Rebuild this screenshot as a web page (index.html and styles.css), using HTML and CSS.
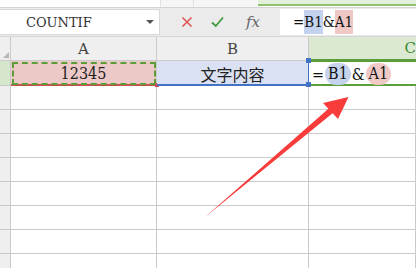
FILE: index.html
```html
<!DOCTYPE html>
<html>
<head>
  <meta charset="UTF-8">
  <title>COUNTIF</title>
  <link rel="stylesheet" href="styles.css">
</head>
<body>
  <div class="top-strip">
    <div class="strip-left"></div>
    <div class="strip-mid"></div>
    <div class="strip-gap"></div>
    <div class="strip-green"></div>
  </div>

  <div class="toolbar">
    <div class="name-box">
      <span class="name-text">COUNTIF</span>
      <span class="caret"></span>
    </div>
    <div class="tools">
      <svg class="icon" width="12" height="12" viewBox="0 0 12 12">
        <path d="M1.5 1.5 L10.5 10.5 M10.5 1.5 L1.5 10.5" stroke="#e05656" stroke-width="1.6" fill="none"/>
      </svg>
      <svg class="icon" width="13" height="12" viewBox="0 0 13 12">
        <path d="M1 6.5 L4.8 10 L12 1.5" stroke="#3e9a3e" stroke-width="1.8" fill="none"/>
      </svg>
      <span class="fx">fx</span>
    </div>
    <div class="formula-box">
      =<span class="hl-blue">B1</span>&amp;<span class="hl-red">A1</span>
    </div>
  </div>

  <div class="sheet">
    <div class="corner"><span class="tri"></span></div>
    <div class="col-head">A</div>
    <div class="col-head">B</div>
    <div class="col-head active">C</div>

    <div class="row-head active"></div>
    <div class="cell ref-a">12345</div>
    <div class="cell ref-b">文字内容</div>
    <div class="cell editing">=<span class="pill blue">B1</span>&amp;<span class="pill red">A1</span></div>

    <div class="row-head"></div><div class="cell"></div><div class="cell"></div><div class="cell"></div>
    <div class="row-head"></div><div class="cell"></div><div class="cell"></div><div class="cell"></div>
    <div class="row-head"></div><div class="cell"></div><div class="cell"></div><div class="cell"></div>
    <div class="row-head"></div><div class="cell"></div><div class="cell"></div><div class="cell"></div>
    <div class="row-head"></div><div class="cell"></div><div class="cell"></div><div class="cell"></div>
    <div class="row-head"></div><div class="cell"></div><div class="cell"></div><div class="cell"></div>
    <div class="row-head"></div><div class="cell"></div><div class="cell"></div><div class="cell"></div>
    <div class="row-head"></div><div class="cell"></div><div class="cell"></div><div class="cell"></div>
  </div>

  <svg class="arrow" width="416" height="268" viewBox="0 0 416 268">
    <polygon points="204,218 328.4,108.8 323,103 348.5,97 338,119 332.6,113.2" fill="#f83c3c"/>
  </svg>
</body>
</html>
```

FILE: styles.css
```css
body {
  margin: 0;
  width: 416px;
  height: 268px;
  overflow: hidden;
  position: relative;
  background: #fff;
  font-family: "DejaVu Serif", serif;
  color: #222;
}
.top-strip {
  display: flex;
  height: 7px;
  border-bottom: 1px solid #d4d4d4;
  background: #fff;
}
.strip-left {
  width: 160px;
  border-right: 1px solid #e2e2e2;
}
.strip-mid {
  width: 32px;
  border-right: 1px solid #e2e2e2;
  background: #f6f6f6;
}
.strip-gap {
  width: 64px;
  background: #f6f6f6;
}
.strip-green {
  flex: 1;
  background: #e4efdc;
  border-bottom: 2px solid #8fc06e;
  margin-bottom: 1px;
}
.toolbar {
  display: flex;
  align-items: center;
  height: 28px;
  background: #ebebeb;
  border-bottom: 1px solid #d6d6d6;
}
.name-box {
  display: flex;
  align-items: center;
  box-sizing: border-box;
  width: 160px;
  height: 26px;
  background: #fff;
  border: 1px solid #d8d8d8;
  border-left: none;
  padding-left: 26px;
  padding-right: 5px;
}
.name-text {
  flex: 1;
  font-family: "DejaVu Serif", serif;
  font-size: 13px;
  color: #333;
}
.caret {
  width: 0;
  height: 0;
  border-left: 4px solid transparent;
  border-right: 4px solid transparent;
  border-top: 4px solid #555;
}
.tools {
  display: flex;
  align-items: center;
  width: 120px;
  padding-left: 21px;
  box-sizing: border-box;
  gap: 18px;
}
.fx {
  font-family: "DejaVu Serif", serif;
  font-style: italic;
  font-size: 15px;
  color: #666;
  margin-left: 4px;
}
.formula-box {
  flex: 1;
  height: 26px;
  background: #fff;
  display: flex;
  align-items: center;
  padding-left: 13px;
  font-family: "DejaVu Serif Condensed", "DejaVu Serif", serif;
  font-size: 15px;
  color: #111;
}
.hl-blue {
  background: #c3d2ee;
  padding: 3px 0;
}
.hl-red {
  background: #efc8c6;
  padding: 3px 0;
}
.sheet {
  display: grid;
  grid-template-columns: 11px 146px 152px 1fr;
  grid-template-rows: 24px 25px repeat(8, 24px);
}
.sheet > div {
  box-sizing: border-box;
  border-right: 1px solid #cacaca;
  border-bottom: 1px solid #cacaca;
}
.corner {
  background: #efefef;
  position: relative;
}
.tri {
  position: absolute;
  right: 1px;
  bottom: 2px;
  width: 0;
  height: 0;
  border-left: 6px solid transparent;
  border-bottom: 6px solid #b5b5b5;
}
.col-head {
  background: #efefef;
  display: flex;
  align-items: center;
  justify-content: center;
  font-family: "DejaVu Serif", serif;
  font-size: 15px;
  color: #444;
}
.col-head.active {
  background: #dbe8d2;
  color: #3d8b2f;
  justify-content: flex-end;
  border-bottom: 2px solid #5a9e3a;
  border-right: none;
}
.row-head {
  background: #efefef;
}
.row-head.active {
  background: #d6e6cc;
}
.cell {
  display: flex;
  align-items: center;
  justify-content: center;
  font-family: "DejaVu Serif Condensed", "DejaVu Serif", serif;
  font-size: 16px;
  padding-top: 2px;
}
.ref-a {
  position: relative;
  background: #ecc9c6;
  outline: 2px dashed #5a9e3a;
  outline-offset: -3px;
  border-bottom: 2px solid #c9504c !important;
}
.ref-a::after {
  content: "";
  position: absolute;
  right: -3px;
  bottom: -3px;
  width: 4px;
  height: 4px;
  background: #c9504c;
}
.ref-b {
  position: relative;
  background: #dae1f3;
  font-family: "Noto Sans CJK SC", sans-serif;
  font-size: 16px;
  border-bottom: 2px solid #4472c4 !important;
  border-right: 1px solid #4472c4 !important;
}
.ref-b::before,
.ref-b::after {
  content: "";
  position: absolute;
  right: -3px;
  width: 5px;
  height: 5px;
  background: #4472c4;
}
.ref-b::before {
  top: -3px;
}
.ref-b::after {
  bottom: -3px;
}
.editing {
  justify-content: flex-start;
  padding-left: 3px;
  font-size: 16px;
  color: #111;
  border-top: 1px solid #5a9e3a;
  border-bottom: 2px solid #5a9e3a !important;
  border-right: none !important;
}
.pill {
  display: inline-block;
  height: 22px;
  line-height: 22px;
  padding: 0 3px;
  border-radius: 11px;
  margin: 0 1px;
}
.pill.blue {
  background: #c5d3ed;
}
.pill.red {
  background: #f0c9c6;
}
.arrow {
  position: absolute;
  left: 0;
  top: 0;
}
```
